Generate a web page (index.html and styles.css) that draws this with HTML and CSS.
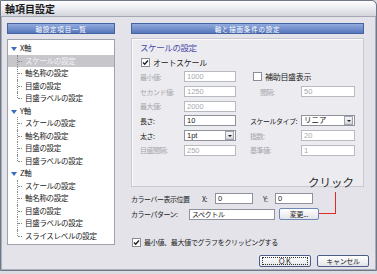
FILE: index.html
```html
<!DOCTYPE html>
<html lang="ja">
<head>
  <meta charset="UTF-8" />
  <title>軸項目設定</title>
  <link rel="stylesheet" href="styles.css">
</head>
<body>
  <div class="window">
    <div class="titlebar">軸項目設定</div>

    <div class="content">
      <!-- 左側：項目一覧 -->
      <div class="left">
        <div class="bar">軸設定項目一覧</div>
        <ul class="tree">
          <li class="node"><span class="arrow"></span>X軸</li>
          <li class="leaf selected">スケールの設定</li>
          <li class="leaf">軸名称の設定</li>
          <li class="leaf">目盛の設定</li>
          <li class="leaf last">目盛ラベルの設定</li>
          <li class="node"><span class="arrow"></span>Y軸</li>
          <li class="leaf">スケールの設定</li>
          <li class="leaf">軸名称の設定</li>
          <li class="leaf">目盛の設定</li>
          <li class="leaf last">目盛ラベルの設定</li>
          <li class="node"><span class="arrow"></span>Z軸</li>
          <li class="leaf">スケールの設定</li>
          <li class="leaf">軸名称の設定</li>
          <li class="leaf">目盛の設定</li>
          <li class="leaf">目盛ラベルの設定</li>
          <li class="leaf last">スライスレベルの設定</li>
        </ul>
      </div>

      <!-- 右側：設定内容 -->
      <div class="right">
        <div class="bar wide">軸と描画条件の設定</div>
        <div class="group">
          <div class="group-title">スケールの設定</div>
          <div class="grid">
            <label class="check span4">
              <svg class="box" width="9" height="9" viewBox="0 0 9 9"><rect x="0.5" y="0.5" width="8" height="8" fill="#fff" stroke="#8c8c94"/><path d="M2 4.5 L3.7 6.3 L7 2.5" fill="none" stroke="#222" stroke-width="1.4"/></svg>
              オートスケール
            </label>

            <span class="lbl off">最小値:</span>
            <span class="field off">1000</span>
            <label class="check span2 sub">
              <svg class="box" width="9" height="9" viewBox="0 0 9 9"><rect x="0.5" y="0.5" width="8" height="8" fill="#fff" stroke="#8c8c94"/></svg>
              補助目盛表示
            </label>

            <span class="lbl off">セカンド値:</span>
            <span class="field off">1250</span>
            <span class="lbl off col3 indent">間隔:</span>
            <span class="field off">50</span>

            <span class="lbl off">最大値:</span>
            <span class="field off">2000</span>
            <span class="cell span2"></span>

            <span class="lbl">長さ:</span>
            <span class="field">10</span>
            <span class="lbl col3">スケールタイプ:</span>
            <span class="field select">リニア<span class="drop"></span></span>

            <span class="lbl">太さ:</span>
            <span class="field select">1pt<span class="drop"></span></span>
            <span class="lbl off col3">指数:</span>
            <span class="field off">20</span>

            <span class="lbl off">目盛間隔:</span>
            <span class="field off">250</span>
            <span class="lbl off col3">基準値:</span>
            <span class="field off">1</span>
          </div>
        </div>

        <div class="row colorbar">
          <span class="lbl w-pos">カラーバー表示位置</span>
          <span class="lbl w-x">X:</span>
          <span class="field short">0</span>
          <span class="lbl w-y">Y:</span>
          <span class="field short">0</span>
        </div>
        <div class="row pattern">
          <span class="lbl w-pat">カラーパターン:</span>
          <span class="field long">スペクトル</span>
          <span class="btn small">変更...</span>
        </div>

        <label class="check clip">
          <svg class="box" width="9" height="9" viewBox="0 0 9 9"><rect x="0.5" y="0.5" width="8" height="8" fill="#fff" stroke="#8c8c94"/><path d="M2 4.5 L3.7 6.3 L7 2.5" fill="none" stroke="#222" stroke-width="1.4"/></svg>
          最小値、最大値でグラフをクリッピングする
        </label>

        <div class="buttons">
          <span class="btn focus"><span class="inner">ＯＫ</span></span>
          <span class="btn">キャンセル</span>
        </div>
      </div>
    </div>

    <!-- 注記 -->
    <div class="note">クリック</div>
    <div class="note-line"></div>
  </div>
</body>
</html>
```

FILE: styles.css
```css
/* --- Reset --- */
* {
  margin: 0;
  padding: 0;
  box-sizing: border-box;
}
html,
body {
  width: 377px;
  height: 274px;
  background: #dcdce2;
  font-family: "Noto Sans CJK JP", sans-serif;
  font-size: 7px;
  color: #222;
  overflow: hidden;
}

/* --- Fenêtre --- */
.window {
  position: relative;
  width: 377px;
  height: 271px;
  background: #e3e3e9;
  border: 1px solid #707888;
  border-top-right-radius: 5px;
  box-shadow: inset 1px 0 0 #a8aebb, inset -1px 0 0 #a8aebb, inset 0 -1px 0 #a8aebb;
}
.titlebar {
  height: 16px;
  padding-left: 4px;
  line-height: 16px;
  font-size: 10px;
  font-weight: 700;
  color: #1a1a1a;
  background: linear-gradient(#ffffff, #e6e7ec 60%, #d4d6dd);
  border-bottom: 1px solid #a4a8b4;
  border-top-right-radius: 5px;
}

.content {
  display: flex;
  gap: 16px;
  padding: 6px 6px 0 6px;
}

/* --- Barres de titre bleues --- */
.bar {
  height: 11px;
  line-height: 10px;
  text-align: center;
  font-size: 6.5px;
  letter-spacing: 0.8px;
  color: #fff;
  background: linear-gradient(#93acdf, #5677bb);
  border: 1px solid #4463a2;
}
.wide {
  width: 233px;
}

/* --- Arbre --- */
.left {
  width: 108px;
}
.tree {
  list-style: none;
  height: 206px;
  margin-top: 5px;
  padding-top: 2px;
  background: #fff;
  border: 1px solid #9ea2ac;
}
.tree li {
  position: relative;
  height: 12.5px;
  line-height: 12.5px;
  font-size: 7.5px;
  letter-spacing: -0.3px;
  white-space: nowrap;
}
.node {
  padding-left: 12px;
}
.arrow {
  position: absolute;
  left: 3px;
  top: 5px;
  border-left: 3px solid transparent;
  border-right: 3px solid transparent;
  border-top: 4px solid #3a6cc4;
}
.leaf {
  padding-left: 17px;
}
.leaf::before {
  content: "";
  position: absolute;
  left: 9px;
  top: 0;
  height: 100%;
  border-left: 1px dotted #8a8a8a;
}
.leaf.last::before {
  height: 50%;
}
.leaf::after {
  content: "";
  position: absolute;
  left: 10px;
  top: 6px;
  width: 4px;
  border-top: 1px dotted #8a8a8a;
}
.leaf.selected {
  background: #c6c6cb;
  color: #f4f4f4;
}

/* --- Colonne droite --- */
.right {
  width: 238px;
}
.group {
  width: 233px;
  height: 149px;
  margin-top: 4px;
  padding: 2px 0 0 8px;
  background: #ececf0;
  border: 1px solid #c9c9d1;
  box-shadow: inset 1px 1px 0 #fafafa;
}
.group-title {
  height: 12px;
  line-height: 12px;
  font-size: 8.5px;
  color: #4a4aa6;
  letter-spacing: -0.4px;
}
.grid {
  display: grid;
  grid-template-columns: 44px 52px 65px 54px;
  grid-auto-rows: 14.67px;
  margin-top: 2px;
  align-items: center;
}
.span2 {
  grid-column: span 2;
}
.span4 {
  grid-column: span 4;
}
.col3 {
  margin-left: 14px;
}
.sub {
  margin-left: 16px;
}

.lbl {
  white-space: nowrap;
  letter-spacing: -0.5px;
}
.lbl.off {
  color: #a4a4ac;
}
.col3.indent {
  margin-left: 24px;
}

/* --- Champs --- */
.field {
  position: relative;
  display: block;
  height: 11px;
  padding-left: 2px;
  line-height: 9px;
  font-family: "Liberation Sans", "Noto Sans CJK JP", sans-serif;
  font-size: 7.5px;
  color: #222;
  background: #fff;
  border: 1px solid #8e929c;
  white-space: nowrap;
}
.field.off {
  color: #a8a8b0;
  border-color: #b8bac2;
}
.select .drop {
  position: absolute;
  right: 1px;
  top: 0;
  width: 9px;
  height: 9px;
  background: linear-gradient(#f6f6f8, #d4d5dc);
  border: 1px solid #9ea2ac;
}
.select .drop::after {
  content: "";
  position: absolute;
  left: 2px;
  top: 3px;
  border-left: 2px solid transparent;
  border-right: 2px solid transparent;
  border-top: 2px solid #222;
}

/* --- Cases à cocher --- */
.check {
  display: flex;
  align-items: center;
  gap: 3px;
  white-space: nowrap;
  letter-spacing: -0.3px;
  padding-left: 1px;
}
.group .check {
  font-size: 8px;
}
.box {
  flex: none;
}

/* --- Lignes du bas --- */
.row {
  display: flex;
  align-items: center;
}
.colorbar {
  margin-top: 6px;
  height: 11px;
}
.pattern {
  margin-top: 4px;
  height: 12px;
}
.w-pos {
  width: 71px;
}
.w-x {
  width: 13px;
}
.w-y {
  width: 12px;
  margin-left: 10px;
}
.w-pat {
  width: 58px;
}
.short {
  width: 38px;
}
.long {
  width: 86px;
  font-family: "Noto Sans CJK JP", sans-serif;
  font-size: 7px;
  letter-spacing: -0.4px;
}
.clip {
  margin-top: 17px;
  height: 10px;
}

/* --- Boutons --- */
.btn {
  display: flex;
  align-items: center;
  justify-content: center;
  width: 52px;
  height: 12px;
  font-size: 7px;
  letter-spacing: -0.3px;
  background: linear-gradient(#ffffff, #e4e5ea);
  border: 1px solid #4c5d86;
  border-radius: 2px;
}
.btn.small {
  width: 40px;
  height: 12px;
  margin-left: 4px;
  border-color: #7088b8;
}
.buttons {
  display: flex;
  justify-content: flex-end;
  gap: 6px;
  margin-top: 8px;
}
.focus .inner {
  display: flex;
  align-items: center;
  justify-content: center;
  width: 46px;
  height: 8px;
  border: 1px dotted #333;
}

/* --- Annotation « クリック » --- */
.note {
  position: absolute;
  left: 307px;
  top: 174px;
  font-size: 11.5px;
  line-height: 14px;
  color: #2a2a2a;
}
.note-line {
  position: absolute;
  left: 318px;
  top: 191px;
  width: 17px;
  height: 22px;
  border-right: 1px solid #e02a2a;
  border-bottom: 1px solid #e02a2a;
}
```
